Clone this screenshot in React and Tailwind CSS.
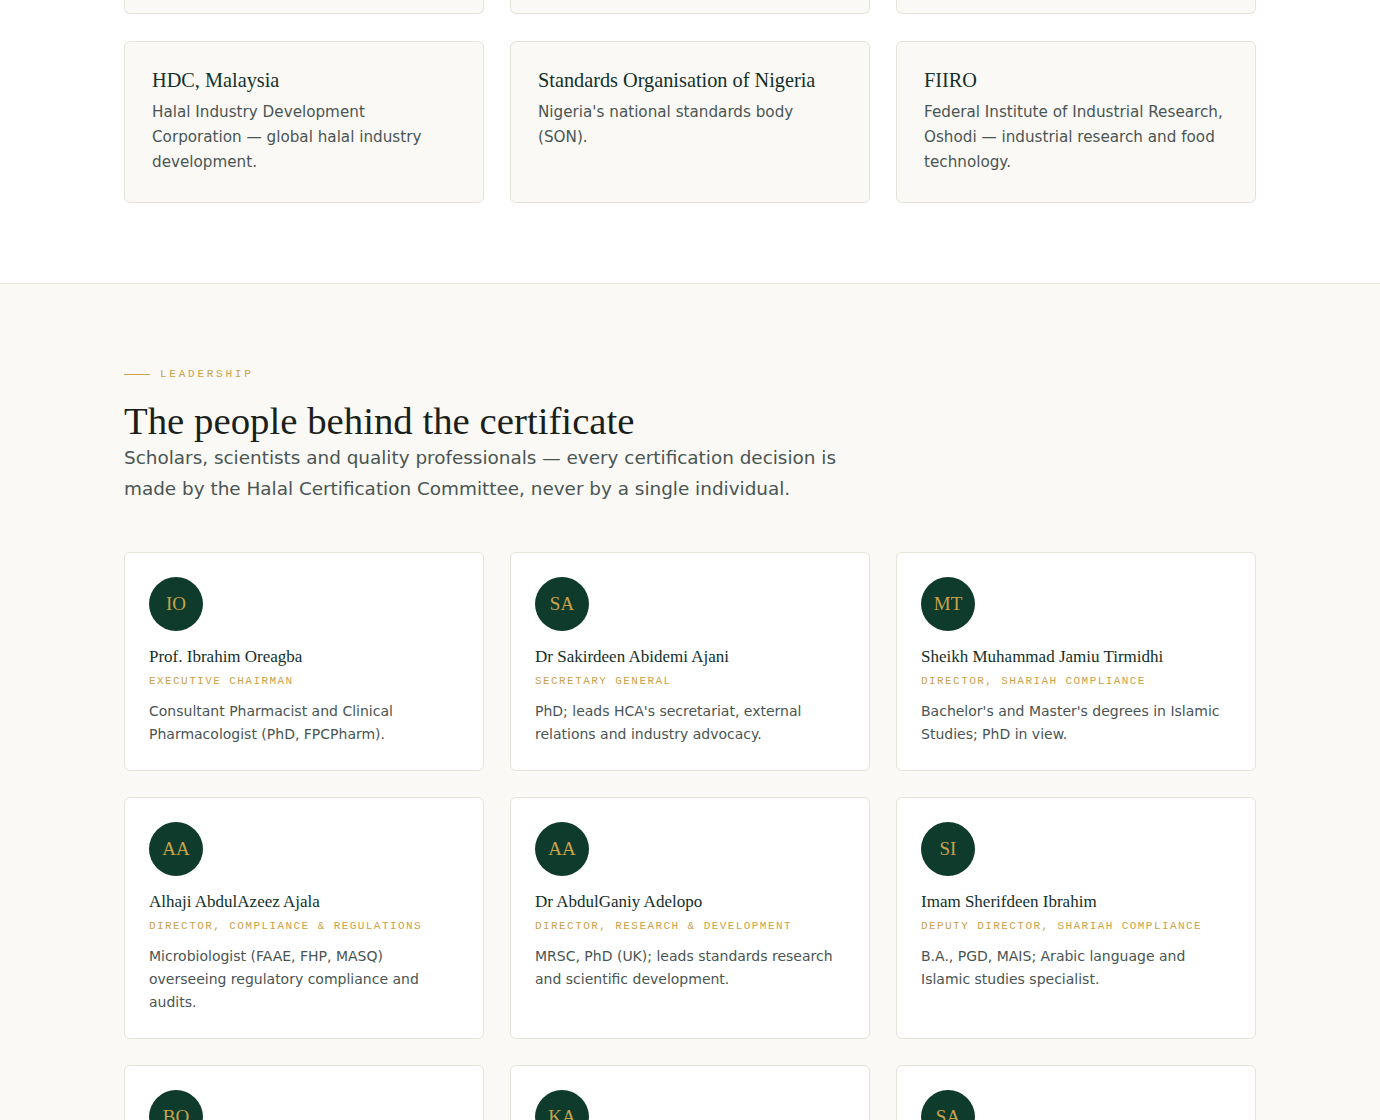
const partners = [
  {
    name: "HDC, Malaysia",
    text: "Halal Industry Development Corporation — global halal industry development.",
  },
  {
    name: "Standards Organisation of Nigeria",
    text: "Nigeria's national standards body (SON).",
  },
  {
    name: "FIIRO",
    text: "Federal Institute of Industrial Research, Oshodi — industrial research and food technology.",
  },
];

const people = [
  {
    initials: "IO",
    name: "Prof. Ibrahim Oreagba",
    role: "Executive Chairman",
    bio: "Consultant Pharmacist and Clinical Pharmacologist (PhD, FPCPharm).",
  },
  {
    initials: "SA",
    name: "Dr Sakirdeen Abidemi Ajani",
    role: "Secretary General",
    bio: "PhD; leads HCA's secretariat, external relations and industry advocacy.",
  },
  {
    initials: "MT",
    name: "Sheikh Muhammad Jamiu Tirmidhi",
    role: "Director, Shariah Compliance",
    bio: "Bachelor's and Master's degrees in Islamic Studies; PhD in view.",
  },
  {
    initials: "AA",
    name: "Alhaji AbdulAzeez Ajala",
    role: "Director, Compliance & Regulations",
    bio: "Microbiologist (FAAE, FHP, MASQ) overseeing regulatory compliance and audits.",
  },
  {
    initials: "AA",
    name: "Dr AbdulGaniy Adelopo",
    role: "Director, Research & Development",
    bio: "MRSC, PhD (UK); leads standards research and scientific development.",
  },
  {
    initials: "SI",
    name: "Imam Sherifdeen Ibrahim",
    role: "Deputy Director, Shariah Compliance",
    bio: "B.A., PGD, MAIS; Arabic language and Islamic studies specialist.",
  },
  {
    initials: "BO",
    name: "Dr Babatunde Olawale",
    role: "Director, Quality Assurance",
    bio: "Food scientist overseeing audits and product quality.",
  },
  {
    initials: "KA",
    name: "Dr Kamal Adeyemi",
    role: "Director, Training",
    bio: "Leads auditor training and capacity building.",
  },
  {
    initials: "SA",
    name: "Sheikh Sulaiman Alabi",
    role: "Member, Shariah Board",
    bio: "Islamic jurisprudence scholar.",
  },
];

const serif = "font-['Liberation_Serif','Times_New_Roman',serif]";
const sans = "font-['DejaVu_Sans','Verdana',sans-serif]";
const mono = "font-['Liberation_Mono','Courier_New',monospace]";

function PersonCard({ person }) {
  return (
    <div className="bg-white border border-[#e6e3db] rounded-[6px] p-6">
      <div
        className={`w-[54px] h-[54px] rounded-full bg-[#0f3b2d] text-[#c9a24a] flex items-center justify-center text-[19px] ${serif}`}
      >
        {person.initials}
      </div>
      <h3 className={`mt-[13px] text-[17px] leading-[26px] text-[#12302a] ${serif}`}>
        {person.name}
      </h3>
      <p
        className={`mt-[3px] text-[11px] leading-[16px] uppercase tracking-[0.13em] text-[#c9a24a] ${mono}`}
      >
        {person.role}
      </p>
      <p className={`mt-[11px] text-[14px] leading-[23px] text-[#4a5553] ${sans}`}>
        {person.bio}
      </p>
    </div>
  );
}

export default function App() {
  return (
    <div className={`min-h-screen bg-white ${sans}`}>
      <section className="bg-white pb-20">
        <div className="max-w-[1132px] mx-auto">
          <div className="grid grid-cols-3 gap-x-[26px]">
            {[0, 1, 2].map((i) => (
              <div
                key={i}
                className="h-[14px] bg-[#faf9f6] border border-t-0 border-[#e6e3db] rounded-b-[6px]"
              ></div>
            ))}
          </div>
          <div className="grid grid-cols-3 gap-x-[26px] gap-y-[26px] mt-[27px]">
            {partners.map((p) => (
              <div
                key={p.name}
                className="bg-[#faf9f6] border border-[#e6e3db] rounded-[6px] p-[27px]"
              >
                <h3 className={`text-[20.3px] leading-[22px] text-[#12302a] ${serif}`}>
                  {p.name}
                </h3>
                <p className="mt-[9px] text-[15.2px] leading-[25px] text-[#4a5553]">
                  {p.text}
                </p>
              </div>
            ))}
          </div>
        </div>
      </section>

      <section className="bg-[#faf9f5] border-t border-[#e6e3db] pt-[82px] pb-20">
        <div className="max-w-[1132px] mx-auto">
          <div className="flex items-center gap-[10px]">
            <span className="w-[26px] h-px bg-[#c9a24a]"></span>
            <span
              className={`text-[11px] leading-[16px] uppercase tracking-[0.25em] text-[#c9a24a] ${mono}`}
            >
              Leadership
            </span>
          </div>
          <h2 className={`mt-[20px] text-[38.8px] leading-[38px] text-[#1a1f1c] ${serif}`}>
            The people behind the certificate
          </h2>
          <p className="mt-[2px] max-w-[730px] text-[18.4px] leading-[31px] text-[#4a5553]">
            Scholars, scientists and quality professionals — every certification
            decision is made by the Halal Certification Committee, never by a
            single individual.
          </p>
          <div className="grid grid-cols-3 gap-x-[26px] gap-y-[26px] mt-[48px]">
            {people.map((p, i) => (
              <PersonCard key={i} person={p} />
            ))}
          </div>
        </div>
      </section>
    </div>
  );
}
